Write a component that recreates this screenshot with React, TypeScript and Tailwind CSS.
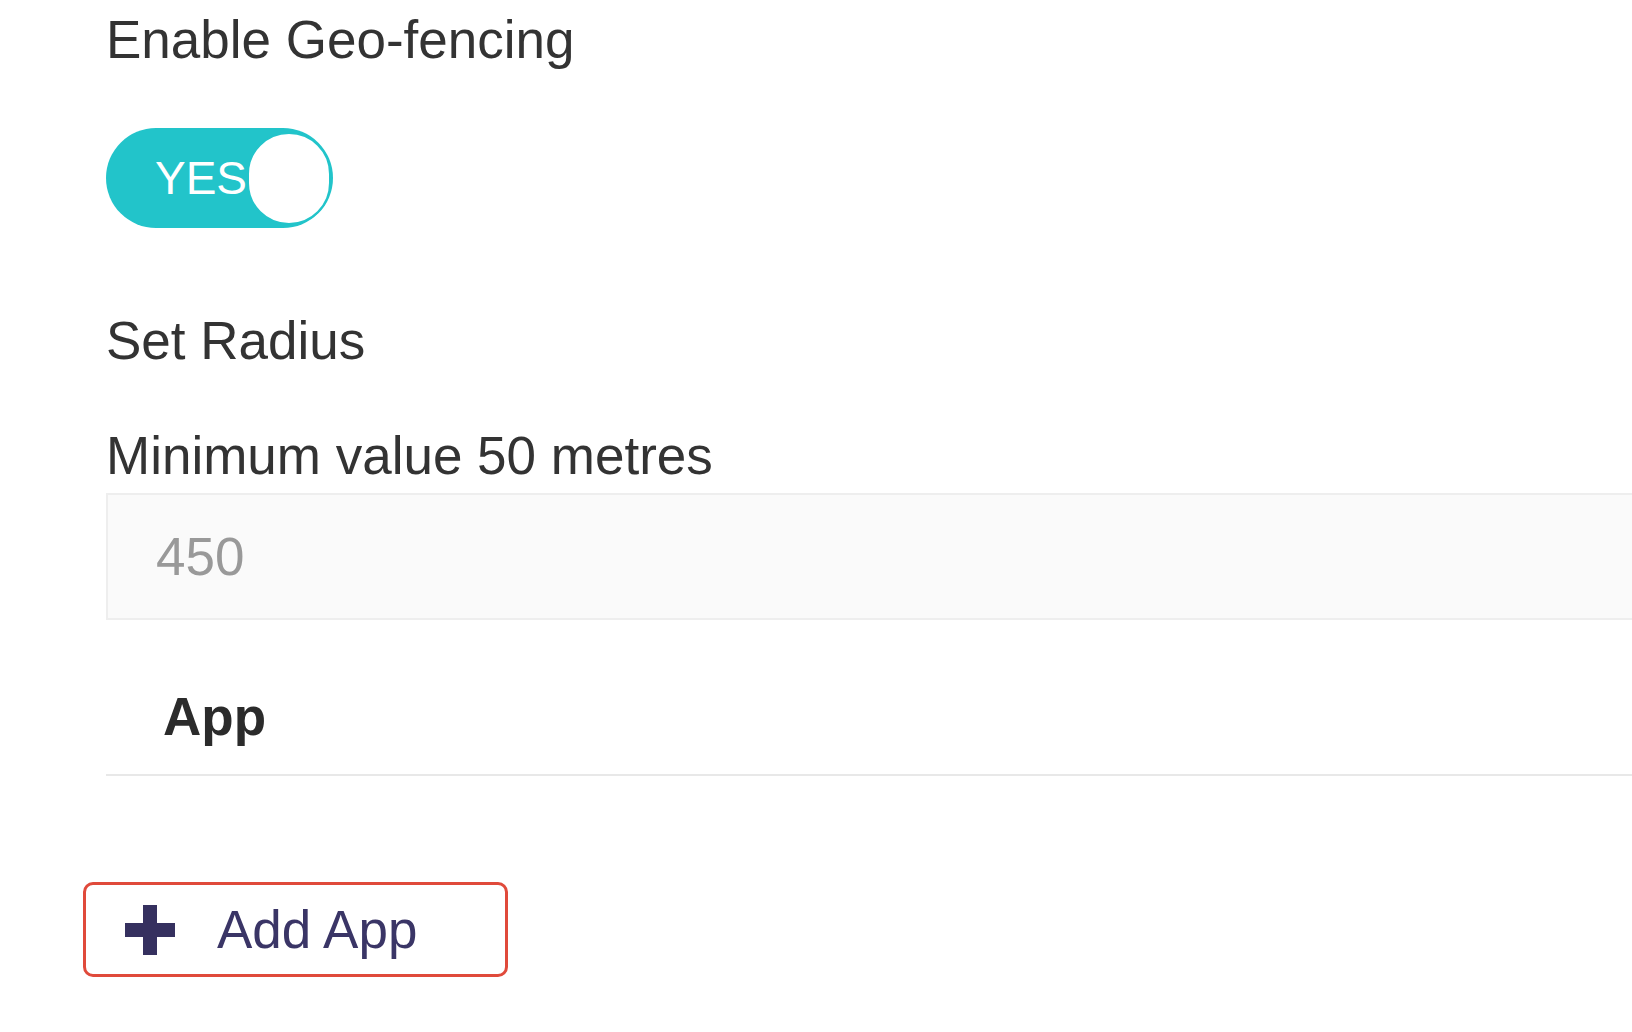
import React, { useState } from 'react';

export default function App() {
  const [enabled, setEnabled] = useState(true);
  const [radius, setRadius] = useState('450');

  return (
    <div className="min-h-screen w-full bg-white pl-[106px] pt-[9px] font-['Liberation_Sans',Arial,sans-serif] text-[53px] leading-[62px] text-[#333333]">
      <div>Enable Geo-fencing</div>

      {/* toggle */}
      <button
        onClick={() => setEnabled(!enabled)}
        className="mt-[57px] flex h-[100px] w-[227px] items-center justify-between rounded-full bg-[#22c4ca] pl-[49px] pr-[2px]"
      >
        <span className="text-[46px] leading-none text-white">{enabled ? 'YES' : 'NO'}</span>
        <span className="h-[93px] w-[86px] rounded-full border-[2px] border-[#22c4ca] bg-white" />
      </button>

      <div className="mt-[82px]">Set Radius</div>
      <div className="mt-[53px]">Minimum value 50 metres</div>

      <div className="mt-[6px] flex h-[127px] items-center border-y-2 border-l-2 border-[#eeeeee] bg-[#fafafa] pl-[48px]">
        <input
          value={radius}
          onChange={(e) => setRadius(e.target.value)}
          className="w-full bg-transparent text-[53px] leading-[62px] text-[#999999] outline-none"
        />
      </div>

      {/* table header */}
      <div className="border-b-2 border-[#e8e8e8] pb-[26px] pl-[57px] pt-[66px] font-bold text-[#2b2b2b]">App</div>

      <button className="ml-[-23px] mt-[106px] flex h-[95px] w-[425px] items-center rounded-[10px] border-[3px] border-[#e04a3b] bg-white pl-[39px] text-[#3a3566]">
        <svg width="50" height="50" viewBox="0 0 50 50" className="shrink-0">
          <rect x="18" y="0" width="14" height="50" fill="#35305f" />
          <rect x="0" y="18" width="50" height="14" fill="#35305f" />
        </svg>
        <span className="ml-[42px] text-[53px] leading-[62px]">Add App</span>
      </button>
    </div>
  );
}
